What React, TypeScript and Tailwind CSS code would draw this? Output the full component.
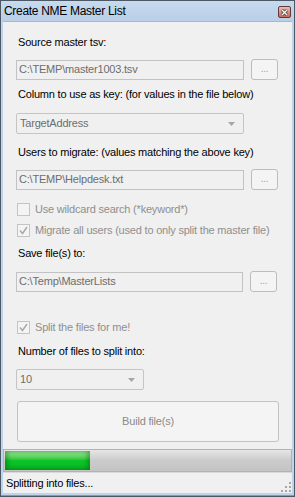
import React from 'react';

const font = { fontFamily: '"Liberation Sans", Arial, sans-serif' };

const TextBox = ({ value, width }: { value: string; width: string }) => (
  <div className={`${width} h-[20px] border border-[#c2c2c2] bg-[#f0f0f0] flex items-center px-[2px] text-[#6d6d6d]`}>
    {value}
  </div>
);

const BrowseButton = () => (
  <div className="w-[27px] h-[21px] ml-[7px] rounded-[3px] border border-[#bdbdbd] bg-[#f4f4f4] flex items-center justify-center text-[10px] leading-none text-[#a3a3a3] pb-[2px]">
    ...
  </div>
);

const Combo = ({ value, width }: { value: string; width: string }) => (
  <div className={`${width} h-[21px] ml-[13px] rounded-[2px] border border-[#c5c5c5] bg-[#f0f0f0] flex items-center justify-between pl-[3px] pr-[8px] text-[#6d6d6d]`}>
    <span>{value}</span>
    <svg width="7" height="4" viewBox="0 0 7 4">
      <path d="M0 0 L7 0 L3.5 4 Z" fill="#a6a6a6" />
    </svg>
  </div>
);

const Check = ({ label, checked }: { label: string; checked?: boolean }) => (
  <div className="h-[14px] ml-[14px] flex items-center whitespace-nowrap text-[#8f8f8f]">
    <div className="w-[13px] h-[13px] shrink-0 border border-[#c4c4c4] bg-[#f4f4f4] flex items-center justify-center">
      {checked && (
        <svg width="9" height="9" viewBox="0 0 9 9">
          <path d="M1 4.5 L3.5 7.5 L8 1" stroke="#a8a8a8" strokeWidth="1.4" fill="none" />
        </svg>
      )}
    </div>
    <span className="ml-[5px]">{label}</span>
  </div>
);

const Label = ({ text, mt }: { text: string; mt: string }) => (
  <div className={`${mt} h-[15px] ml-[15px] flex items-center whitespace-nowrap text-black`}>{text}</div>
);

export default function App() {
  return (
    <div style={font} className="w-[295px] h-[497px] border border-[#4d5866] bg-[#bfd4eb] flex flex-col overflow-hidden text-[11px] tracking-[-0.2px]">
      {/* Title bar */}
      <div className="h-[20px] flex items-center justify-between pl-[3px] pr-[3px] bg-gradient-to-b from-[#c7daee] to-[#b9cfe7]">
        <span className="text-[12px] tracking-[-0.3px] text-black">Create NME Master List</span>
        <div className="w-[13px] h-[12px] mt-[2px] rounded-[2px] border border-[#5e3b3b] bg-gradient-to-b from-[#e8bdb6] to-[#c66a5d] flex items-center justify-center">
          <svg width="7" height="7" viewBox="0 0 7 7">
            <path d="M1 1 L6 6 M6 1 L1 6" stroke="#3b2424" strokeWidth="2.6" />
            <path d="M1 1 L6 6 M6 1 L1 6" stroke="#ffffff" strokeWidth="1.4" />
          </svg>
        </div>
      </div>

      {/* Client area */}
      <div className="mx-[2px] flex-1 bg-[#f0f0f0] flex flex-col border-t border-[#a4b8cf]">
        <Label text="Source master tsv:" mt="mt-[13px]" />
        <div className="mt-[9px] ml-[13px] h-[21px] flex items-center">
          <TextBox value="C:\TEMP\master1003.tsv" width="w-[228px]" />
          <BrowseButton />
        </div>

        <Label text="Column to use as key: (for values in the file below)" mt="mt-[7px]" />
        <div className="mt-[11px]">
          <Combo value="TargetAddress" width="w-[228px]" />
        </div>

        <Label text="Users to migrate: (values matching the above key)" mt="mt-[11px]" />
        <div className="mt-[9px] ml-[13px] h-[21px] flex items-center">
          <TextBox value="C:\TEMP\Helpdesk.txt" width="w-[228px]" />
          <BrowseButton />
        </div>

        <div className="mt-[12px]">
          <Check label="Use wildcard search (*keyword*)" />
        </div>
        <div className="mt-[7px]">
          <Check label="Migrate all users (used to only split the master file)" checked />
        </div>

        <Label text="Save file(s) to:" mt="mt-[9px]" />
        <div className="mt-[10px] ml-[13px] h-[21px] flex items-center">
          <TextBox value="C:\Temp\MasterLists" width="w-[227px]" />
          <BrowseButton />
        </div>

        <div className="mt-[28px]">
          <Check label="Split the files for me!" checked />
        </div>

        <Label text="Number of files to split into:" mt="mt-[10px]" />
        <div className="mt-[10px]">
          <Combo value="10" width="w-[128px]" />
        </div>

        <div className="mt-[11px] ml-[14px] w-[262px] h-[41px] rounded-[3px] border border-[#c2c2c2] bg-[#f4f4f4] flex items-center justify-center text-[#8a8a8a]">
          Build file(s)
        </div>

        {/* Progress bar */}
        <div className="mt-[7px] h-[23px] border border-[#b2b2b2] bg-gradient-to-b from-[#e6e6e6] via-[#cbcbcb] to-[#c4c4c4] flex p-[1px]">
          <div className="w-[85px] h-full bg-gradient-to-b from-[#9bec9b] via-[#0ec42a] to-[#07b424] shadow-[inset_-3px_0_4px_rgba(0,80,0,0.35),inset_3px_0_4px_rgba(0,80,0,0.35)]" />
        </div>

        {/* Status bar */}
        <div className="h-[21px] border-t border-[#d9d9d9] bg-[#f0f0f0] flex items-center justify-between pl-[3px] pr-[1px]">
          <span className="text-black">Splitting into files...</span>
          <svg width="10" height="10" viewBox="0 0 10 10" className="self-end mb-[1px]">
            <rect x="8" y="8" width="2" height="2" fill="#a6a6a6" />
            <rect x="4" y="8" width="2" height="2" fill="#a6a6a6" />
            <rect x="8" y="4" width="2" height="2" fill="#a6a6a6" />
            <rect x="0" y="8" width="2" height="2" fill="#a6a6a6" />
            <rect x="4" y="4" width="2" height="2" fill="#a6a6a6" />
            <rect x="8" y="0" width="2" height="2" fill="#a6a6a6" />
          </svg>
        </div>
      </div>
      <div className="h-[3px] border-b border-[#6aa3d6]" />
    </div>
  );
}
